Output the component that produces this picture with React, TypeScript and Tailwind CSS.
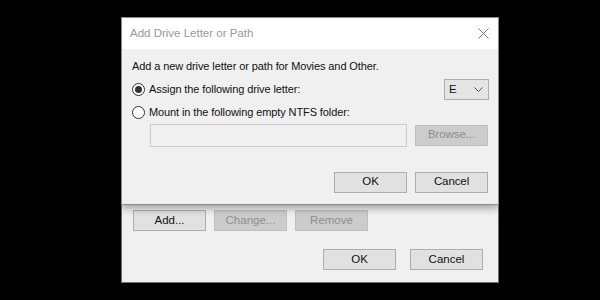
import React from "react";

const font = { fontFamily: '"Liberation Sans", Arial, sans-serif' };

function WinButton({ label, disabled }: { label: string; disabled?: boolean }) {
  return (
    <div
      className={
        "w-[73px] h-[21px] flex items-center justify-center border text-[11.5px] leading-none " +
        (disabled
          ? "bg-[#cccccc] border-[#bfbfbf] text-[#8d8d8d]"
          : "bg-[#e1e1e1] border-[#adadad] text-[#111]")
      }
    >
      {label}
    </div>
  );
}

function Radio({ checked }: { checked?: boolean }) {
  return (
    <div className="w-[13px] h-[13px] rounded-full border border-[#333] bg-white flex items-center justify-center">
      {checked && <div className="w-[7px] h-[7px] rounded-full bg-[#333]" />}
    </div>
  );
}

export default function App() {
  return (
    <div className="w-[600px] h-[300px] bg-black pt-[17px] pl-[121px]" style={font}>
      <div className="relative w-[378px]">
        {/* dialog behind */}
        <div className="h-[266px] bg-[#f0f0f0] border border-[#6f6f6f] flex flex-col justify-end px-[11px] pb-[12px]">
          <div className="flex gap-[8px]">
            <WinButton label="Add..." />
            <WinButton label="Change..." disabled />
            <WinButton label="Remove" disabled />
          </div>
          <div className="flex justify-end gap-[14px] mt-[18px] pr-[4px]">
            <WinButton label="OK" />
            <WinButton label="Cancel" />
          </div>
        </div>

        {/* Add Drive Letter or Path */}
        <div className="absolute left-0 top-0 w-[378px] h-[188px] bg-[#f0f0f0] border border-[#8a8a8a] shadow-[0_3px_8px_rgba(0,0,0,0.35)] flex flex-col">
          <div className="h-[31px] bg-white flex items-center justify-between pl-[8px] pr-[9px]">
            <span className="text-[11.5px] text-[#999]">Add Drive Letter or Path</span>
            <svg width="11" height="11" viewBox="0 0 11 11">
              <path d="M0.5 0.5 L10.5 10.5 M10.5 0.5 L0.5 10.5" stroke="#7a7a7a" strokeWidth="1" />
            </svg>
          </div>
          <div className="flex-1 px-[10px] pt-[10px] text-[11px] tracking-[-0.1px] text-[#111]">
            <div className="leading-[15px]">Add a new drive letter or path for Movies and Other.</div>
            <div className="flex items-center justify-between mt-[5px]">
              <div className="flex items-center gap-[4px]">
                <Radio checked />
                <span>Assign the following drive letter:</span>
              </div>
              <div className="w-[45px] h-[21px] mr-[-1px] bg-[#e5e5e5] border border-[#adadad] flex items-center justify-between pl-[4px] pr-[5px] text-[11.5px]">
                <span>E</span>
                <svg width="9" height="5" viewBox="0 0 9 5">
                  <path d="M0.5 0.5 L4.5 4.5 L8.5 0.5" stroke="#555" fill="none" strokeWidth="1" />
                </svg>
              </div>
            </div>
            <div className="flex items-center gap-[4px] mt-[4px]">
              <Radio />
              <span>Mount in the following empty NTFS folder:</span>
            </div>
            <div className="flex items-center gap-[8px] mt-[3px] pl-[18px]">
              <div className="w-[257px] h-[23px] bg-[#f0f0f0] border border-[#cccccc]" />
              <WinButton label="Browse..." disabled />
            </div>
            <div className="flex justify-end gap-[8px] mt-[25px]">
              <WinButton label="OK" />
              <WinButton label="Cancel" />
            </div>
          </div>
        </div>
      </div>
    </div>
  );
}
